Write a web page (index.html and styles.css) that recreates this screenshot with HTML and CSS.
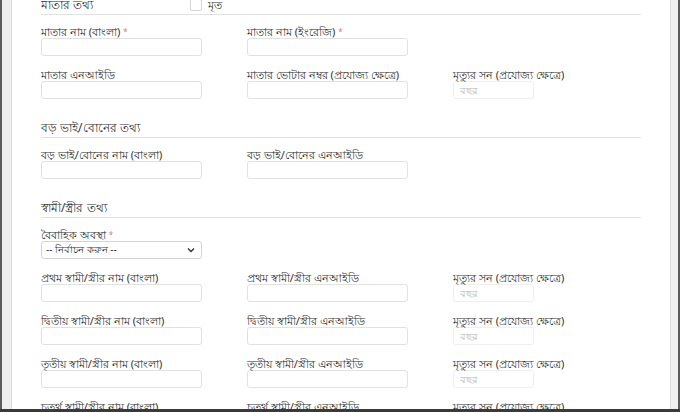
FILE: index.html
```html
<!DOCTYPE html>
<html lang="bn">
<head>
  <meta charset="UTF-8">
  <meta name="viewport" content="width=device-width, initial-scale=1.0">
  <title>পারিবারিক তথ্য</title>
  <link rel="stylesheet" href="styles.css">
</head>
<body>
  <div class="window">
    <div class="gutter"></div>
    <div class="content">
      <form class="form">
        <!-- মাতার তথ্য -->
        <div class="section first">
          <div class="section-title">
            <span class="title-text">মাতার তথ্য</span>
            <label class="check"><span class="box"></span>মৃত</label>
          </div>
          <div class="row">
            <div class="field">
              <label>মাতার নাম (বাংলা) <span class="req">*</span></label>
              <input type="text" class="input">
            </div>
            <div class="field">
              <label>মাতার নাম (ইংরেজি) <span class="req">*</span></label>
              <input type="text" class="input">
            </div>
          </div>
          <div class="row">
            <div class="field">
              <label>মাতার এনআইডি</label>
              <input type="text" class="input">
            </div>
            <div class="field">
              <label>মাতার ভোটার নম্বর (প্রযোজ্য ক্ষেত্রে)</label>
              <input type="text" class="input">
            </div>
            <div class="field">
              <label>মৃত্যুর সন (প্রযোজ্য ক্ষেত্রে)</label>
              <input type="text" class="input year" placeholder="বছর" disabled>
            </div>
          </div>
        </div>

        <!-- বড় ভাই/বোনের তথ্য -->
        <div class="section">
          <div class="section-title">
            <span class="title-text">বড় ভাই/বোনের তথ্য</span>
          </div>
          <div class="row">
            <div class="field">
              <label>বড় ভাই/বোনের নাম (বাংলা)</label>
              <input type="text" class="input">
            </div>
            <div class="field">
              <label>বড় ভাই/বোনের এনআইডি</label>
              <input type="text" class="input">
            </div>
          </div>
        </div>

        <!-- স্বামী/স্ত্রীর তথ্য -->
        <div class="section">
          <div class="section-title">
            <span class="title-text">স্বামী/স্ত্রীর তথ্য</span>
          </div>
          <div class="row">
            <div class="field">
              <label>বৈবাহিক অবস্থা <span class="req">*</span></label>
              <div class="select">
                <span>-- নির্বাচন করুন --</span>
                <svg width="8" height="6" viewBox="0 0 8 6"><path d="M1 1.5 L4 4.5 L7 1.5" fill="none" stroke="#333" stroke-width="1.4"/></svg>
              </div>
            </div>
          </div>
          <div class="row">
            <div class="field">
              <label>প্রথম স্বামী/স্ত্রীর নাম (বাংলা)</label>
              <input type="text" class="input">
            </div>
            <div class="field">
              <label>প্রথম স্বামী/স্ত্রীর এনআইডি</label>
              <input type="text" class="input">
            </div>
            <div class="field">
              <label>মৃত্যুর সন (প্রযোজ্য ক্ষেত্রে)</label>
              <input type="text" class="input year" placeholder="বছর" disabled>
            </div>
          </div>
          <div class="row">
            <div class="field">
              <label>দ্বিতীয় স্বামী/স্ত্রীর নাম (বাংলা)</label>
              <input type="text" class="input">
            </div>
            <div class="field">
              <label>দ্বিতীয় স্বামী/স্ত্রীর এনআইডি</label>
              <input type="text" class="input">
            </div>
            <div class="field">
              <label>মৃত্যুর সন (প্রযোজ্য ক্ষেত্রে)</label>
              <input type="text" class="input year" placeholder="বছর" disabled>
            </div>
          </div>
          <div class="row">
            <div class="field">
              <label>তৃতীয় স্বামী/স্ত্রীর নাম (বাংলা)</label>
              <input type="text" class="input">
            </div>
            <div class="field">
              <label>তৃতীয় স্বামী/স্ত্রীর এনআইডি</label>
              <input type="text" class="input">
            </div>
            <div class="field">
              <label>মৃত্যুর সন (প্রযোজ্য ক্ষেত্রে)</label>
              <input type="text" class="input year" placeholder="বছর" disabled>
            </div>
          </div>
          <div class="row">
            <div class="field">
              <label>চতুর্থ স্বামী/স্ত্রীর নাম (বাংলা)</label>
              <input type="text" class="input">
            </div>
            <div class="field">
              <label>চতুর্থ স্বামী/স্ত্রীর এনআইডি</label>
              <input type="text" class="input">
            </div>
            <div class="field">
              <label>মৃত্যুর সন (প্রযোজ্য ক্ষেত্রে)</label>
              <input type="text" class="input year" placeholder="বছর" disabled>
            </div>
          </div>
        </div>
      </form>
    </div>
    <div class="scrollbar"></div>
  </div>
</body>
</html>
```

FILE: styles.css
```css
html, body {
  margin: 0;
  padding: 0;
  width: 100%;
  height: 100%;
  overflow: hidden;
  background-color: #fff;
  font-family: "Noto Sans", "DejaVu Sans", sans-serif;
  color: #333;
}
.window {
  display: flex;
  height: 409px;
  border-bottom: 3px solid #3a3a3a;
  overflow: hidden;
}
.gutter {
  width: 9px;
  background-color: #efefef;
  border-left: 2px solid #5c5c5c;
  border-right: 1px solid #dcdcdc;
  flex-shrink: 0;
}
.content {
  flex: 1;
  padding-left: 29px;
  overflow: hidden;
}
.scrollbar {
  width: 7px;
  background-color: #f0f0f0;
  border-left: 1px solid #dedede;
  border-right: 2px solid #5c5c5c;
  flex-shrink: 0;
}
.form {
  width: 600px;
}
.section {
  margin-top: 9px;
}
.section.first {
  margin-top: -3px;
}
.section-title {
  display: flex;
  align-items: center;
  font-size: 12px;
  line-height: 16px;
  padding-bottom: 1px;
  border-bottom: 1px solid #e2e2e2;
  margin-bottom: 10px;
  color: #333;
}
.title-text {
  width: 149px;
}
.check {
  display: flex;
  align-items: center;
  gap: 6px;
  font-size: 11px;
}
.check .box {
  width: 10px;
  height: 10px;
  border: 1px solid #d6d6d6;
  border-radius: 2px;
  background-color: #fff;
}
.row {
  display: grid;
  grid-template-columns: 206px 206px 188px;
}
.field {
  margin-bottom: 12px;
}
.field label {
  display: block;
  font-size: 11px;
  line-height: 13px;
  color: #333;
  white-space: nowrap;
}
.req {
  color: #e07a7a;
  font-size: 8px;
  vertical-align: top;
}
.input {
  display: block;
  box-sizing: border-box;
  width: 161px;
  height: 18px;
  margin: 0;
  padding: 0 6px;
  border: 1px solid #e1e1e1;
  border-radius: 3px;
  background-color: #fff;
  font-family: inherit;
  font-size: 10px;
}
.input.year {
  width: 81px;
  border-color: #efefef;
}
.input.year::placeholder {
  color: #b5b5b5;
}
.select {
  box-sizing: border-box;
  width: 161px;
  height: 18px;
  display: flex;
  align-items: center;
  justify-content: space-between;
  padding: 0 6px 0 4px;
  border: 1px solid #d4d4d4;
  border-radius: 3px;
  font-size: 10px;
  color: #333;
}
```
